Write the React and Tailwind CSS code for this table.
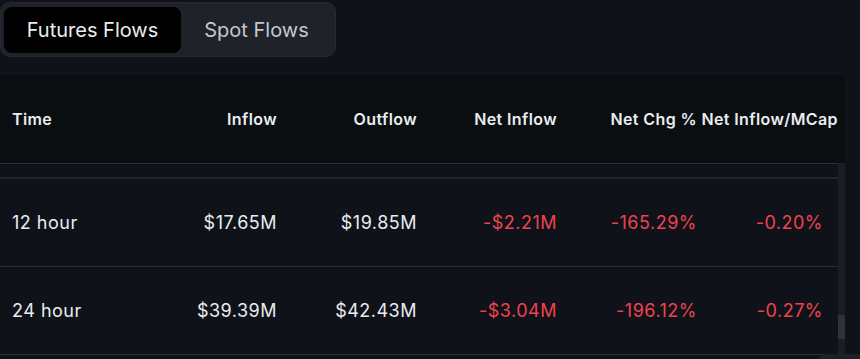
export default function App() {
  const rows = [
    ["12 hour", "$17.65M", "$19.85M", "-$2.21M", "-165.29%", "-0.20%"],
    ["24 hour", "$39.39M", "$42.43M", "-$3.04M", "-196.12%", "-0.27%"],
  ];
  const font = { fontFamily: "Inter, 'Noto Sans', sans-serif" };
  return (
    <div className="relative w-[860px] h-[359px] bg-[#0f1219] overflow-hidden" style={font}>
      <div className="pt-[2px] h-[75px]">
        <div className="flex w-[336px] h-[55px] items-center rounded-[10px] bg-[#1f2229] border border-[#262a31] px-[3px]">
          <div className="flex h-[46px] w-[177px] items-center justify-center rounded-[8px] bg-black text-[20px] text-[#eaecef]">
            Futures Flows
          </div>
          <div className="flex h-[46px] flex-1 items-center justify-center text-[20px] text-[#c4c8ce]">
            Spot Flows
          </div>
        </div>
      </div>
      <div className="w-[845px] h-[88px] bg-[#0b0e11] grid grid-cols-[137px_140px_140px_140px_140px_141px] items-center text-[16px] font-semibold tracking-[0.4px] text-[#eaecef] pr-[7px]">
        <div className="pl-[12px]">Time</div>
        <div className="text-right">Inflow</div>
        <div className="text-right">Outflow</div>
        <div className="text-right">Net Inflow</div>
        <div className="text-right whitespace-nowrap">Net Chg %</div>
        <div className="text-right whitespace-nowrap">Net Inflow/MCap</div>
      </div>
      <div className="flex w-[845px]">
        <div className="w-[838px]">
          <div className="h-[1px] bg-[#2b2f36]"></div>
          <div className="h-[13px] bg-[#0f121a]"></div>
          <div className="h-[2px] bg-[#202329]"></div>
          {rows.map((r, i) => (
            <div key={i} className="grid grid-cols-[137px_140px_140px_140px_140px_141px] h-[88px] items-center border-b border-[#2b2f36] text-[18px] tracking-[0.5px]">
              <div className="pl-[12px] text-[#eaecef]">{r[0]}</div>
              <div className="text-right text-[#eaecef]">{r[1]}</div>
              <div className="text-right text-[#eaecef]">{r[2]}</div>
              <div className="text-right text-[#f0424f]">{r[3]}</div>
              <div className="text-right text-[#f0424f]">{r[4]}</div>
              <div className="text-right pr-[15px] text-[#f0424f]">{r[5]}</div>
            </div>
          ))}
        </div>
        <div className="w-[7px] h-[192px] bg-[#1a1d23] flex flex-col justify-end">
          <div className="h-[24px] bg-[#2f3237] mb-[16px]"></div>
        </div>
      </div>
      <div className="absolute left-[818px] top-[354px] w-[60px] h-[20px] rounded-[8px] bg-[#1c1f25]"></div>
    </div>
  );
}
